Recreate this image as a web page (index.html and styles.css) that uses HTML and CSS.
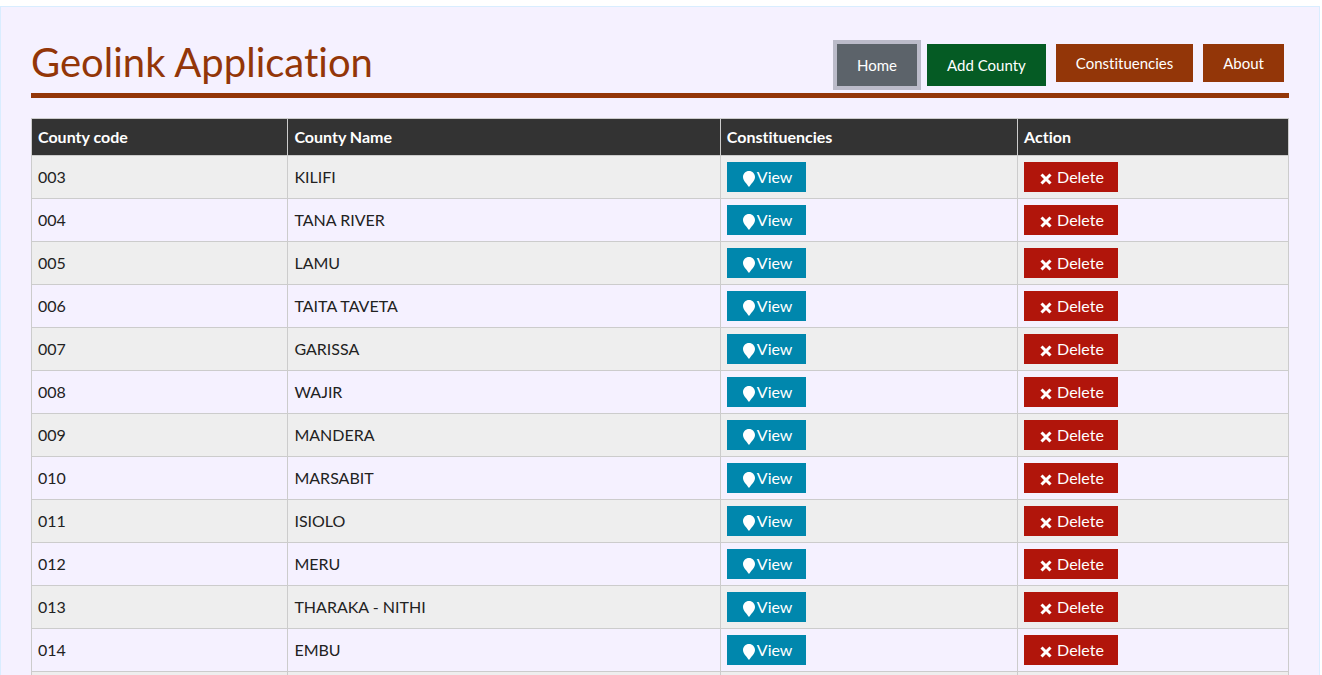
FILE: index.html
```
<!DOCTYPE html>
<html lang="en">
<head>
<meta charset="utf-8">
<meta name="viewport" content="width=device-width, initial-scale=1">
<title>Geolink Application</title>
<link rel="stylesheet" href="styles.css">
</head>
<body>
<svg class="sprite" aria-hidden="true">
  <symbol id="pin" viewBox="0 0 12 16"><path d="M6 0C2.600 0 0 2.700 0 6c0 3.400 3.300 6.300 6 10 2.700-3.700 6-6.600 6-10 0-3.300-2.600-6-6-6z"/></symbol>
  <symbol id="cross" viewBox="0 0 12 12"><path d="M1.500 1.500l9 9M10.500 1.500l-9 9"/></symbol>
</svg>
<main class="panel">
  <header class="header">
    <h1 class="title">Geolink Application</h1>
    <nav class="nav">
      <button class="nav-item nav-home" type="button">Home</button>
      <button class="nav-item nav-add" type="button">Add County</button>
      <a class="nav-item nav-link" href="#constituencies">Constituencies</a>
      <a class="nav-item nav-link" href="#about">About</a>
    </nav>
  </header>
  <table class="counties">
    <colgroup><col class="col-code"><col class="col-name"><col class="col-view"><col class="col-action"></colgroup>
    <thead>
      <tr><th scope="col">County code</th><th scope="col">County Name</th><th scope="col">Constituencies</th><th scope="col">Action</th></tr>
    </thead>
    <tbody id="rows"></tbody>
  </table>
</main>
<script src="app.js"></script>
</body>
</html>
```
FILE: styles.css
```
* { box-sizing: border-box; }

body {
  margin: 6px 2px 0 0;
  background: #fff;
  color: #222;
  font: 16px/24px Lato, "Open Sans", sans-serif;
  font-variant-ligatures: none;
}

.sprite { display: none; }

.panel {
  padding: 30px;
  border: 1px solid #d9edff;
  background: #f5f1ff;
}

.header {
  display: flex;
  justify-content: space-between;
  align-items: flex-start;
  min-height: 61px;
  margin-bottom: 20px;
  border-bottom: 5px solid #933608;
}

.title {
  margin: 0;
  color: #933608;
  font-size: 40px;
  font-weight: 400;
  line-height: 50px;
}

.nav {
  display: flex;
  align-items: flex-start;
  gap: 10px;
  padding: 7px 5px 0 0;
}

.nav-item {
  padding: 7px 20px;
  border: 0;
  color: #fff;
  font: inherit;
  font-size: 15px;
  font-variant-ligatures: none;
  text-decoration: none;
}

.nav-home,
.nav-add { padding: 9px 20px; }
.nav-home {
  background: #5c636a;
  box-shadow: 0 0 0 4px #bbbbc9;
}
.nav-add { background: #055b24; }
.nav-link { background: #933608; }

.counties {
  width: 100%;
  border-collapse: collapse;
  table-layout: fixed;
}

.col-code { width: 20.4%; }
.col-name { width: 34.4%; }
.col-view { width: 23.65%; }

.counties th,
.counties td {
  padding: 6px;
  border: 1px solid #ccc;
  text-align: left;
  vertical-align: middle;
}

.counties th {
  background: #333;
  color: #fff;
  font-weight: 700;
}

.counties tbody tr:nth-child(odd) { background: #eee; }

.action {
  display: flex;
  align-items: center;
  height: 30px;
  padding: 0 14px 0 16px;
  border: 0;
  color: #fff;
  font: inherit;
}

.view { gap: 2px; background: #0087ad; }
.delete { gap: 5px; background: #b1150b; }

.pin {
  width: 12px;
  height: 16px;
  margin-top: 4px;
  fill: #fff;
}

.cross {
  width: 12px;
  height: 12px;
  margin-top: 4px;
  fill: none;
  stroke: #fff;
  stroke-width: 3;
}
```
FILE: app.js
```
const counties = [
  ["003", "KILIFI"],
  ["004", "TANA RIVER"],
  ["005", "LAMU"],
  ["006", "TAITA TAVETA"],
  ["007", "GARISSA"],
  ["008", "WAJIR"],
  ["009", "MANDERA"],
  ["010", "MARSABIT"],
  ["011", "ISIOLO"],
  ["012", "MERU"],
  ["013", "THARAKA - NITHI"],
  ["014", "EMBU"],
  ["015", "KITUI"]
];

document.getElementById("rows").innerHTML = counties.map(([code, name]) => `
  <tr>
    <td>${code}</td>
    <td>${name}</td>
    <td><button class="action view" type="button"><svg class="pin" aria-hidden="true"><use href="#pin"/></svg>View</button></td>
    <td><button class="action delete" type="button"><svg class="cross" aria-hidden="true"><use href="#cross"/></svg>Delete</button></td>
  </tr>`).join("");
```
